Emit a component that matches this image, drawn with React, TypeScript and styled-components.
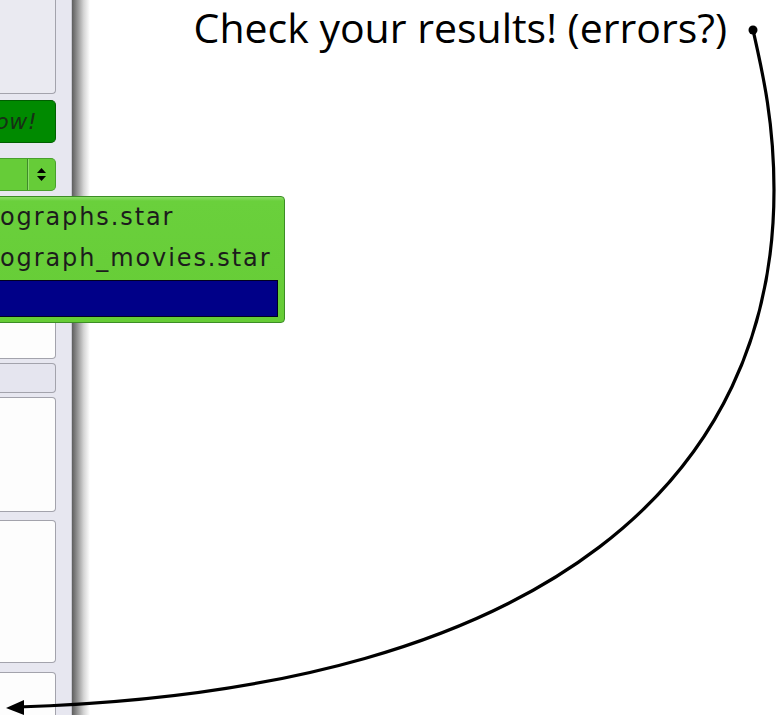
import { FC } from 'react'
import styled, { createGlobalStyle } from 'styled-components'

const GlobalStyle = createGlobalStyle`
    html, body {
        margin: 0;
        padding: 0;
        background: #ffffff;
    }
    body {
        font-family: "DejaVu Sans", sans-serif;
    }
`

const Page = styled.div`
    position: relative;
    width: 776px;
    height: 715px;
    display: flex;
    overflow: hidden;
    background: #ffffff;
`

/* --- left side: the app window, cut off at the slide's edge --- */

const SidePanel = styled.div`
    position: relative;
    width: 56px;
    flex-shrink: 0;
    padding-right: 15px;
    background: #e7e7f0;
    display: flex;
    flex-direction: column;
`

const WindowEdge = styled.div`
    width: 18px;
    flex-shrink: 0;
    border-left: 1px solid #c9c9d2;
    background: linear-gradient(to right, #5e5e5e 0%, #8a8a8a 25%, #d4d4d4 65%, #ffffff 100%);
`

const Frame = styled.div<{ $height: number; $gap: number; $fill?: string }>`
    height: ${p => p.$height}px;
    margin-top: ${p => p.$gap}px;
    box-sizing: border-box;
    flex-shrink: 0;
    background: ${p => p.$fill || '#fdfdfd'};
    border: 1px solid #a3a3ac;
    border-left: none;
    border-radius: 0 4px 4px 0;
`

const TopFrame = styled(Frame)`
    border-top: none;
    border-radius: 0 0 4px 0;
`

const RunButton = styled.div`
    height: 43px;
    margin-top: 6px;
    box-sizing: border-box;
    flex-shrink: 0;
    display: flex;
    align-items: center;
    justify-content: flex-end;
    padding-right: 18px;
    background: #008a00;
    border: 1px solid #005f00;
    border-left: none;
    border-radius: 0 5px 5px 0;
    font-style: italic;
    font-size: 22px;
    letter-spacing: 0.5px;
    color: #163016;
    white-space: nowrap;
`

const Combo = styled.div`
    height: 33px;
    margin-top: 15px;
    box-sizing: border-box;
    flex-shrink: 0;
    display: flex;
    justify-content: flex-end;
    background: #66cc38;
    border: 1px solid #48a02c;
    border-left: none;
    border-radius: 0 5px 5px 0;
`

const ComboButton = styled.div`
    width: 27px;
    display: flex;
    align-items: center;
    justify-content: center;
    border-left: 1px solid #3f8a29;
    box-shadow: inset 1px 0 0 #8ede6c;
`

const SpinArrows: FC = () => (
    <svg width="9" height="13" viewBox="0 0 9 13">
        <path d="M4.5 0 L9 5 L0 5 Z" fill="#000" />
        <path d="M4.5 13 L9 8 L0 8 Z" fill="#000" />
    </svg>
)

/* --- popup list of star files --- */

const Popup = styled.div`
    position: absolute;
    top: 196px;
    left: -4px;
    width: 289px;
    height: 127px;
    box-sizing: border-box;
    padding: 1px 6px 4px 0;
    display: flex;
    flex-direction: column;
    background: linear-gradient(to bottom, #8bdc66 0px, #6ad03c 4px, #66cc36 100%);
    border: 1px solid #3c8d25;
    border-radius: 4px;
    z-index: 2;
`

const PopupItem = styled.div<{ $selected?: boolean }>`
    height: ${p => (p.$selected ? 37 : 41)}px;
    box-sizing: border-box;
    display: flex;
    align-items: center;
    padding-left: 3px;
    padding-bottom: ${p => (p.$selected ? 0 : 4)}px;
    font-size: 24px;
    letter-spacing: 1.9px;
    color: #1c1c1c;
    white-space: nowrap;
    background: ${p => (p.$selected ? '#000088' : 'transparent')};
    border: ${p => (p.$selected ? '1px solid #000022' : 'none')};
`

/* --- slide area --- */

const Slide = styled.div`
    flex: 1;
    display: flex;
    flex-direction: column;
`

const TitleRow = styled.div`
    display: flex;
    justify-content: flex-end;
    padding: 3px 49px 0 0;
`

const Title = styled.div`
    font-family: "Open Sans", "Lato", sans-serif;
    font-size: 41px;
    line-height: 48px;
    color: #000;
    white-space: nowrap;
`

const ArrowLayer = styled.svg`
    position: absolute;
    left: 0;
    top: 0;
    pointer-events: none;
    z-index: 3;
`

const PointerArrow: FC = () => (
    <ArrowLayer width="776" height="715" viewBox="0 0 776 715">
        <circle cx="753" cy="30" r="4.5" fill="#000" />
        <path
            d="M753 30 C 762 70, 774 120, 774 190 C 774 470, 560 690, 18 707"
            fill="none"
            stroke="#000"
            strokeWidth="3.2"
        />
        <path d="M6 708 L24 700 L24 715 Z" fill="#000" />
    </ArrowLayer>
)

const App = () => {
    return (
        <>
            <GlobalStyle />
            <Page>
                <SidePanel>
                    <TopFrame $height={94} $gap={0} $fill="#eaeaf1" />
                    <RunButton>ow!</RunButton>
                    <Combo>
                        <ComboButton><SpinArrows /></ComboButton>
                    </Combo>
                    <Frame $height={163} $gap={5} />
                    <Frame $height={30} $gap={4} $fill="#e5e5ef" />
                    <Frame $height={115} $gap={4} />
                    <Frame $height={143} $gap={8} />
                    <Frame $height={80} $gap={9} />

                    <Popup>
                        <PopupItem>ographs.star</PopupItem>
                        <PopupItem>ograph_movies.star</PopupItem>
                        <PopupItem $selected />
                    </Popup>
                </SidePanel>
                <WindowEdge />
                <Slide>
                    <TitleRow>
                        <Title>Check your results! (errors?)</Title>
                    </TitleRow>
                </Slide>
                <PointerArrow />
            </Page>
        </>
    )
}

export default App
